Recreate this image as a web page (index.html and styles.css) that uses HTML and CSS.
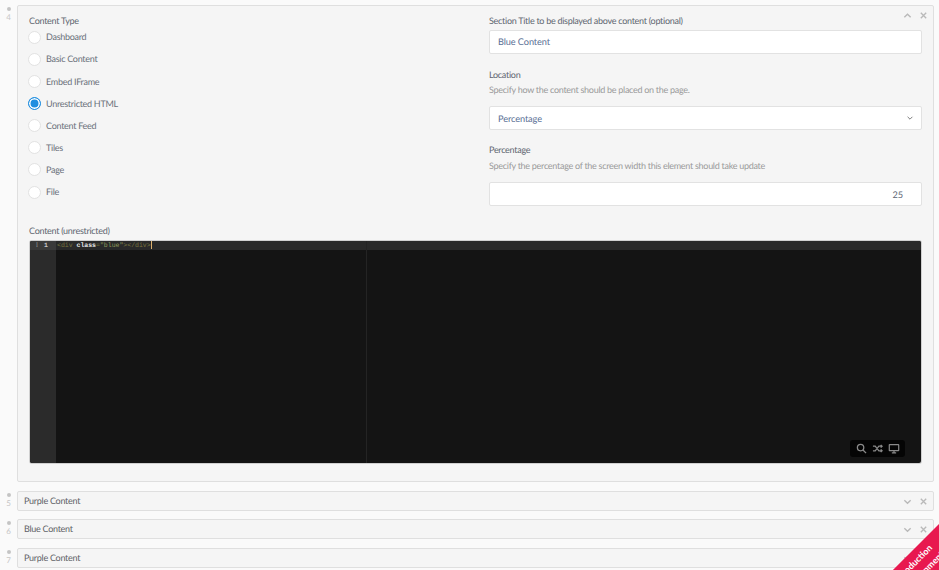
FILE: index.html
```html
<!DOCTYPE html>
<html lang="en">
<head>
<meta charset="utf-8">
<title>Content sections</title>
<link rel="stylesheet" href="styles.css">
</head>
<body>
<main class="list">
  <section class="row row-open">
    <div class="handle"><span class="dot"></span><span class="num">4</span></div>
    <div class="panel panel-open">
      <div class="actions actions-open">
        <svg class="icon" viewBox="0 0 10 10"><path d="M1.5 7 5 3.5 8.500 7"/></svg>
        <svg class="icon" viewBox="0 0 10 10"><path d="M2 2l6 6M8 2l-6 6"/></svg>
      </div>
      <div class="columns">
        <div class="col-left">
          <div class="label">Content Type</div>
          <div class="radio"><span class="circle"></span>Dashboard</div>
          <div class="radio"><span class="circle"></span>Basic Content</div>
          <div class="radio"><span class="circle"></span>Embed IFrame</div>
          <div class="radio"><span class="circle circle-on"></span>Unrestricted HTML</div>
          <div class="radio"><span class="circle"></span>Content Feed</div>
          <div class="radio"><span class="circle"></span>Tiles</div>
          <div class="radio"><span class="circle"></span>Page</div>
          <div class="radio"><span class="circle"></span>File</div>
        </div>
        <div class="col-right">
          <div class="label">Section Title to be displayed above content (optional)</div>
          <div class="input input-first">Blue Content</div>
          <div class="label label-gap">Location</div>
          <div class="help">Specify how the content should be placed on the page.</div>
          <div class="input input-after-help">Percentage
            <svg class="chev" viewBox="0 0 10 10"><path d="M2 3.500 5 6.500 8 3.500"/></svg>
          </div>
          <div class="label label-gap label-gap-tight">Percentage</div>
          <div class="help help-loose">Specify the percentage of the screen width this element should take update</div>
          <div class="input input-after-help input-num">25</div>
        </div>
      </div>
      <div class="label label-content">Content (unrestricted)</div>
      <div class="editor">
        <div class="gutter"><span class="gutter-line"><span class="fold">⁞</span><span>1</span></span></div>
        <div class="code">
          <div class="code-line"><span class="tag">&lt;div</span> <span class="attr">class</span><span class="tag">=</span><span class="str">"blue"</span><span class="tag">&gt;&lt;/div&gt;</span><span class="cursor"></span></div>
          <div class="margin-line"></div>
          <div class="tools">
            <svg class="tool" viewBox="0 0 12 12"><circle cx="5" cy="5" r="3.500"/><path d="M7.600 7.600 11 11"/></svg>
            <svg class="tool" viewBox="0 0 12 12"><path d="M1 3.500h2.500l4 5H11M1 8.500h2.500l4-5H11M9.500 2 11 3.500 9.500 5M9.500 7 11 8.500 9.500 10"/></svg>
            <svg class="tool tool-wide" viewBox="0 0 14 12"><rect x="1.500" y="1.500" width="11" height="7" rx=".5"/><path d="M4.500 11h5M7 9v2"/></svg>
          </div>
        </div>
      </div>
    </div>
  </section>
  <section class="row">
    <div class="handle"><span class="dot"></span><span class="num">5</span></div>
    <div class="panel panel-closed">Purple Content
      <div class="actions">
        <svg class="icon" viewBox="0 0 10 10"><path d="M1.500 3.500 5 7 8.500 3.500"/></svg>
        <svg class="icon" viewBox="0 0 10 10"><path d="M2 2l6 6M8 2l-6 6"/></svg>
      </div>
    </div>
  </section>
  <section class="row">
    <div class="handle"><span class="dot"></span><span class="num">6</span></div>
    <div class="panel panel-closed">Blue Content
      <div class="actions">
        <svg class="icon" viewBox="0 0 10 10"><path d="M1.500 3.500 5 7 8.500 3.500"/></svg>
        <svg class="icon" viewBox="0 0 10 10"><path d="M2 2l6 6M8 2l-6 6"/></svg>
      </div>
    </div>
  </section>
  <section class="row">
    <div class="handle"><span class="dot"></span><span class="num">7</span></div>
    <div class="panel panel-closed">Purple Content
      <div class="actions">
        <svg class="icon" viewBox="0 0 10 10"><path d="M1.500 3.500 5 7 8.500 3.500"/></svg>
        <svg class="icon" viewBox="0 0 10 10"><path d="M2 2l6 6M8 2l-6 6"/></svg>
      </div>
    </div>
  </section>
</main>
<div class="ribbon">Production<br>Environment</div>
</body>
</html>
```
FILE: styles.css
```css
html, body { margin: 0; padding: 0; height: 570px; overflow: hidden; background: #fafafa; }
body { font-family: Lato, "Liberation Sans", sans-serif; font-size: 9px; letter-spacing: -0.280px; color: #5b6472; position: relative; text-rendering: geometricPrecision; }
.list { padding: 5px 5px 0 0; display: flex; flex-direction: column; gap: 8.500px; }
.row { display: flex; }
.handle { width: 17px; flex: none; display: flex; flex-direction: column; align-items: center; padding-top: 1px; }
.dot { width: 4px; height: 4px; border-radius: 50%; background: #c4c4c4; margin-top: 1px; }
.num { font-size: 8px; color: #c6c6c6; line-height: 9px; margin-top: 2px; }
.panel { flex: 1; position: relative; background: #f5f5f5; border: 1px solid #dfdfdf; border-radius: 2px; box-sizing: border-box; }
.panel-open { height: 477px; padding: 9px 11px 0; }
.panel-closed { height: 20px; line-height: 18px; padding-left: 6px; color: #5e6166; }
.actions { position: absolute; right: 5px; top: 5px; display: flex; gap: 7px; }
.icon { width: 9px; height: 9px; fill: none; stroke: #b9b9b9; stroke-width: 1.500; }
.columns { display: flex; }
.col-left { width: 460px; flex: none; }
.col-right { flex: 1; }
.label { color: #5e6570; line-height: 11px; }
.radio { height: 22.150px; display: flex; align-items: center; color: #6a707a; padding-bottom: 0.500px; box-sizing: border-box; }
.circle { width: 11px; height: 11px; border: 1px solid #e2e2e2; border-radius: 50%; background: #fff; margin: 0.500px 5px 0 -1px; flex: none; }
.circle-on { background: #1e8ee0; box-shadow: inset 0 0 0 1.500px #fff; border-color: #1e8ee0; }
.help { color: #9a9a9a; line-height: 11px; margin-top: 4px; }
.help-loose { margin-top: 5px; }
.input { height: 24px; background: #fff; border: 1px solid #e2e2e2; border-radius: 2px; box-sizing: border-box; line-height: 22px; padding: 0 8px; color: #5a6f95; font-size: 9.200px; letter-spacing: -0.100px; position: relative; }
.input-first { margin-top: 4px; }
.input-after-help { margin-top: 11.500px; line-height: 23px; }
.input-num { text-align: right; padding-right: 18px; color: #5b6472; }
.label-gap { margin-top: 14.500px; }
.label-gap-tight { margin-top: 13.500px; }
.chev { position: absolute; right: 7px; top: 7px; width: 8px; height: 8px; fill: none; stroke: #777; stroke-width: 1.200; }
.label-content { margin-top: 18.500px; }
.editor { margin: 5px 1px 0; height: 222.500px; display: flex; background: #141414; border-radius: 2px; box-shadow: 0 0 0 1px #d0d0d0; overflow: hidden; font-family: "Liberation Mono", monospace; font-size: 6.500px; letter-spacing: 0; }
.gutter { width: 26px; background: #2b2b2b; flex: none; }
.gutter-line { display: flex; justify-content: space-between; height: 9px; line-height: 9px; padding: 0 8px 0 5px; background: #3a3a3a; color: #c8c8c8; font-weight: bold; }
.fold { color: #888; }
.code { flex: 1; position: relative; }
.code-line { height: 9px; line-height: 9px; background: #292929; color: #f0f0f0; white-space: pre; padding-left: 1px; }
.tag { color: #77743f; }
.attr { color: #e8e8e8; font-weight: bold; }
.str { color: #8f9a5a; }
.cursor { display: inline-block; width: 1px; height: 8px; background: #ddb26f; vertical-align: top; }
.margin-line { position: absolute; left: 310px; top: 0; bottom: 0; width: 1px; background: #242424; }
.tools { position: absolute; right: 16px; bottom: 6px; width: 55px; height: 17px; box-sizing: border-box; background: #050505; border-radius: 3px; display: flex; align-items: center; justify-content: center; gap: 5px; }
.tool { width: 11px; height: 11px; fill: none; stroke: #8a8a8a; stroke-width: 1.400; }
.tool-wide { width: 12px; }
.ribbon { position: absolute; right: -50.500px; bottom: -14px; width: 140px; height: 34px; box-sizing: border-box; background: #e8184f; color: #fff; transform: rotate(-45deg); text-align: center; font-size: 9px; letter-spacing: 0; font-weight: bold; line-height: 13px; padding-top: 3px; }
```
